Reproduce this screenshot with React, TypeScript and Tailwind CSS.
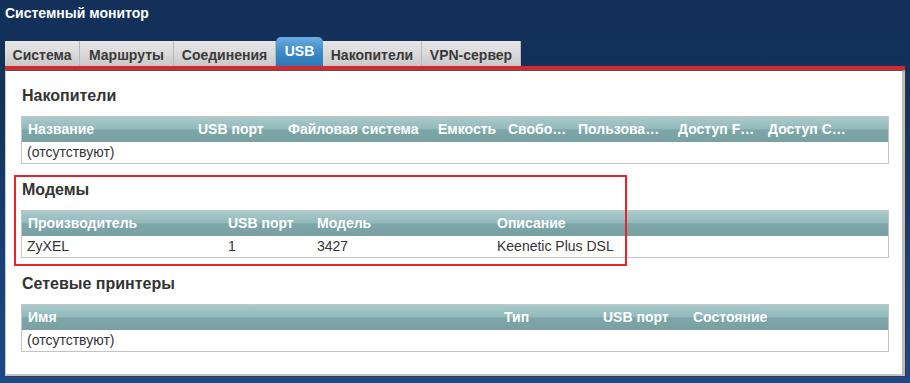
import React from 'react';

interface Col {
  label: string;
  w: number;
}

interface TableProps {
  cols: Col[];
  rows: string[][];
}

const tabs = [
  { title: 'Система', w: 75 },
  { title: 'Маршруты', w: 94 },
  { title: 'Соединения', w: 102 },
  { title: 'USB', w: 47, active: true },
  { title: 'Накопители', w: 99 },
  { title: 'VPN-сервер', w: 99 },
];

const DataTable: React.FC<TableProps> = ({ cols, rows }) => {
  return (
    <div className="w-[868px] border border-[#c4c4c4]">
      <div className="flex h-[25px] pl-[6px] leading-[25px] font-bold text-white bg-[linear-gradient(to_bottom,#a8cbcc_0%,#94babc_46%,#7ea6a8_52%,#79a1a3_100%)]">
        {cols.map((c, i) => (
          <div key={i} className="flex-none whitespace-nowrap" style={{ width: c.w }}>
            {c.label}
          </div>
        ))}
      </div>
      {rows.map((r, ri) => (
        <div key={ri} className="flex h-[21px] pl-[5px] leading-[21px] text-[#333]">
          {r.map((cell, ci) => (
            <div
              key={ci}
              className="flex-none whitespace-nowrap"
              style={{ width: ci === 0 ? cols[ci].w + 1 : cols[ci]?.w }}
            >
              {cell}
            </div>
          ))}
        </div>
      ))}
    </div>
  );
};

const Section: React.FC<{ title: string; first?: boolean; children: React.ReactNode }> = ({
  title,
  first,
  children,
}) => (
  <div className={first ? '' : 'mt-[16px]'}>
    <h3 className="pl-[1px] text-[16px] leading-[20px] font-bold text-[#333] mb-[10px]">{title}</h3>
    {children}
  </div>
);

export default function App() {
  return (
    <div className="relative w-[910px] h-[383px] overflow-hidden text-[14px] font-['Liberation_Sans',Arial,sans-serif] bg-[linear-gradient(to_bottom,#12305a_0%,#13335b_30%,#163e72_60%,#1c4a88_100%)]">
      <div className="h-[37px] pl-[5px] pt-[3px] leading-[20px] font-bold text-white">Системный монитор</div>

      <div className="flex items-end h-[29px] ml-[5px]">
        {tabs.map((t, i) =>
          t.active ? (
            <div
              key={i}
              className="flex-none h-[29px] pt-[4px] leading-[21px] text-center font-bold text-white rounded-t-[5px] bg-[linear-gradient(to_bottom,#68ade0_0%,#3f8cc7_50%,#2d78b5_100%)]"
              style={{ width: t.w }}
            >
              {t.title}
            </div>
          ) : (
            <div
              key={i}
              className="flex-none h-[25px] pt-[4px] leading-[21px] text-center font-bold text-[#3a3a3a] border-r border-[#b9b9b9] bg-[linear-gradient(to_bottom,#e6e6e6_0%,#dadada_50%,#c8c8c8_100%)]"
              style={{ width: t.w }}
            >
              {t.title}
            </div>
          )
        )}
      </div>

      <div className="ml-[5px] w-[900px] h-[4px] bg-[#d02a30]" />

      <div className="ml-[5px] w-[900px] h-[306px] bg-white border-t border-t-[#555] border-l border-l-[#c8c8c8] border-r-[3px] border-r-[#bdbdbd] border-b-2 border-b-[#c4c4c4] shadow-[1px_1px_0_#3a3a3a] pl-[15px] pt-[15px]">
        <Section title="Накопители" first>
          <DataTable
            cols={[
              { label: 'Название', w: 170 },
              { label: 'USB порт', w: 90 },
              { label: 'Файловая система', w: 150 },
              { label: 'Емкость', w: 70 },
              { label: 'Свобо…', w: 70 },
              { label: 'Пользова…', w: 100 },
              { label: 'Доступ F…', w: 90 },
              { label: 'Доступ С…', w: 90 },
            ]}
            rows={[['(отсутствуют)']]}
          />
        </Section>

        <Section title="Модемы">
          <DataTable
            cols={[
              { label: 'Производитель', w: 200 },
              { label: 'USB порт', w: 89 },
              { label: 'Модель', w: 180 },
              { label: 'Описание', w: 200 },
            ]}
            rows={[['ZyXEL', '1', '3427', 'Keenetic Plus DSL']]}
          />
        </Section>

        <Section title="Сетевые принтеры">
          <DataTable
            cols={[
              { label: 'Имя', w: 476 },
              { label: 'Тип', w: 99 },
              { label: 'USB порт', w: 90 },
              { label: 'Состояние', w: 120 },
            ]}
            rows={[['(отсутствуют)']]}
          />
        </Section>
      </div>

      {/* annotation frame around the modems block */}
      <div className="absolute left-[14px] top-[175px] w-[613px] h-[91px] border-2 border-[#e8232b] pointer-events-none" />
    </div>
  );
}
